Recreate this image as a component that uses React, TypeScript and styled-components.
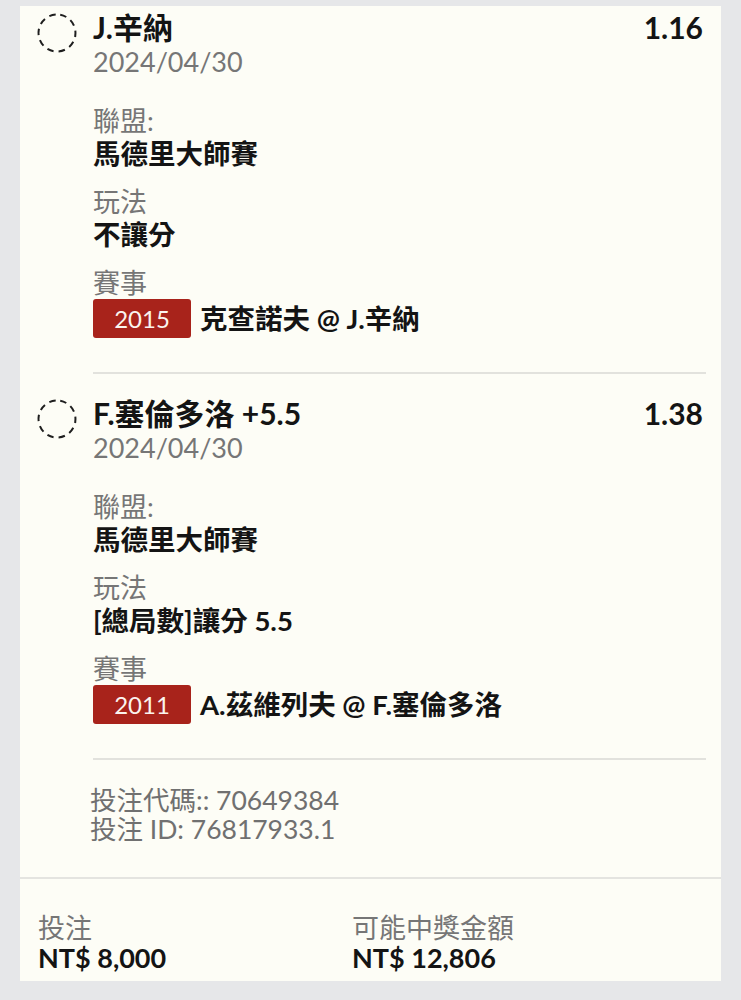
import React from 'react';
import styled, { createGlobalStyle } from 'styled-components';

type SelectionData = {
  title: string;
  odds: string;
  date: string;
  league: string;
  market: string;
  eventId: string;
  matchup: string;
};

const selections: SelectionData[] = [
  {
    title: 'J.辛納',
    odds: '1.16',
    date: '2024/04/30',
    league: '馬德里大師賽',
    market: '不讓分',
    eventId: '2015',
    matchup: '克查諾夫 @ J.辛納',
  },
  {
    title: 'F.塞倫多洛 +5.5',
    odds: '1.38',
    date: '2024/04/30',
    league: '馬德里大師賽',
    market: '[總局數]讓分 5.5',
    eventId: '2011',
    matchup: 'A.茲維列夫 @ F.塞倫多洛',
  },
];

const GlobalStyle = createGlobalStyle`
  html, body {
    margin: 0;
    padding: 0;
    background: #e6e7e9;
  }
  body {
    font-family: Lato, "Noto Sans CJK TC", sans-serif;
    color: #141414;
  }
`;

const Page = styled.div`
  padding: 6px 20px 20px;
`;

const Card = styled.div`
  background: #fdfdf6;
`;

const Slip = styled.div`
  padding-right: 15px;
`;

const Selection = styled.div<{ $first: boolean }>`
  display: grid;
  grid-template-columns: 73px 1fr;
  padding: ${(p) => (p.$first ? '4px' : '22px')} 0 34px;
`;

const Rule = styled.div`
  height: 2px;
  background: #e2e2dd;
  margin-left: 73px;
`;

const Marker = styled.div`
  padding: 2px 0 0 16px;
`;

const Body = styled.div`
  display: flex;
  flex-direction: column;
`;

const HeaderRow = styled.div`
  display: flex;
  justify-content: space-between;
  align-items: baseline;
`;

const Title = styled.div`
  font-size: 30px;
  font-weight: 700;
  line-height: 34px;
`;

const Odds = styled.div`
  font-size: 30px;
  font-weight: 700;
  line-height: 34px;
  padding-right: 3px;
`;

const DateText = styled.div`
  font-size: 27px;
  line-height: 35px;
  color: #767676;
  margin-bottom: 25px;
`;

const Field = styled.div`
  & + & {
    margin-top: 15px;
  }
`;

const Label = styled.div`
  font-size: 27px;
  line-height: 33px;
  color: #767676;
`;

const Value = styled.div`
  font-size: 27.5px;
  line-height: 33px;
  font-weight: 700;
`;

const EventRow = styled.div`
  display: flex;
  align-items: center;
  gap: 9px;
`;

const Badge = styled.span`
  display: inline-flex;
  align-items: center;
  justify-content: center;
  width: 98px;
  height: 39px;
  border-radius: 3px;
  background: #a8231b;
  color: #fbf3ee;
  font-size: 24px;
`;

const Info = styled.div`
  padding: 26px 0 33px 70px;
  font-size: 26.5px;
  line-height: 29px;
  color: #707070;
`;

const Footer = styled.div`
  border-top: 2px solid #e4e4e0;
  display: grid;
  grid-template-columns: 314px 1fr;
  padding: 34px 18px 8px;
`;

const FooterLabel = styled.div`
  font-size: 27px;
  line-height: 30px;
  color: #767676;
`;

const Amount = styled.div`
  font-size: 27px;
  line-height: 30px;
  font-weight: 700;
`;

const DashedCircle = () => (
  <svg width="42" height="42" viewBox="0 0 42 42">
    <circle
      cx="21"
      cy="21"
      r="18.5"
      fill="none"
      stroke="#1e1e1e"
      strokeWidth="2"
      strokeDasharray="6.5 5.1"
      transform="rotate(-80 21 21)"
    />
  </svg>
);

export default function App() {
  return (
    <Page>
      <GlobalStyle />
      <Card>
        <Slip>
          {selections.map((s, i) => (
            <React.Fragment key={s.eventId}>
              <Selection $first={i === 0}>
                <Marker>
                  <DashedCircle />
                </Marker>
                <Body>
                  <HeaderRow>
                    <Title>{s.title}</Title>
                    <Odds>{s.odds}</Odds>
                  </HeaderRow>
                  <DateText>{s.date}</DateText>
                  <Field>
                    <Label>聯盟:</Label>
                    <Value>{s.league}</Value>
                  </Field>
                  <Field>
                    <Label>玩法</Label>
                    <Value>{s.market}</Value>
                  </Field>
                  <Field>
                    <Label>賽事</Label>
                    <EventRow>
                      <Badge>{s.eventId}</Badge>
                      <Value>{s.matchup}</Value>
                    </EventRow>
                  </Field>
                </Body>
              </Selection>
              <Rule />
            </React.Fragment>
          ))}
        </Slip>
        <Info>
          <div>投注代碼:: 70649384</div>
          <div>投注 ID: 76817933.1</div>
        </Info>
        <Footer>
          <div>
            <FooterLabel>投注</FooterLabel>
            <Amount>NT$ 8,000</Amount>
          </div>
          <div>
            <FooterLabel>可能中獎金額</FooterLabel>
            <Amount>NT$ 12,806</Amount>
          </div>
        </Footer>
      </Card>
    </Page>
  );
}
